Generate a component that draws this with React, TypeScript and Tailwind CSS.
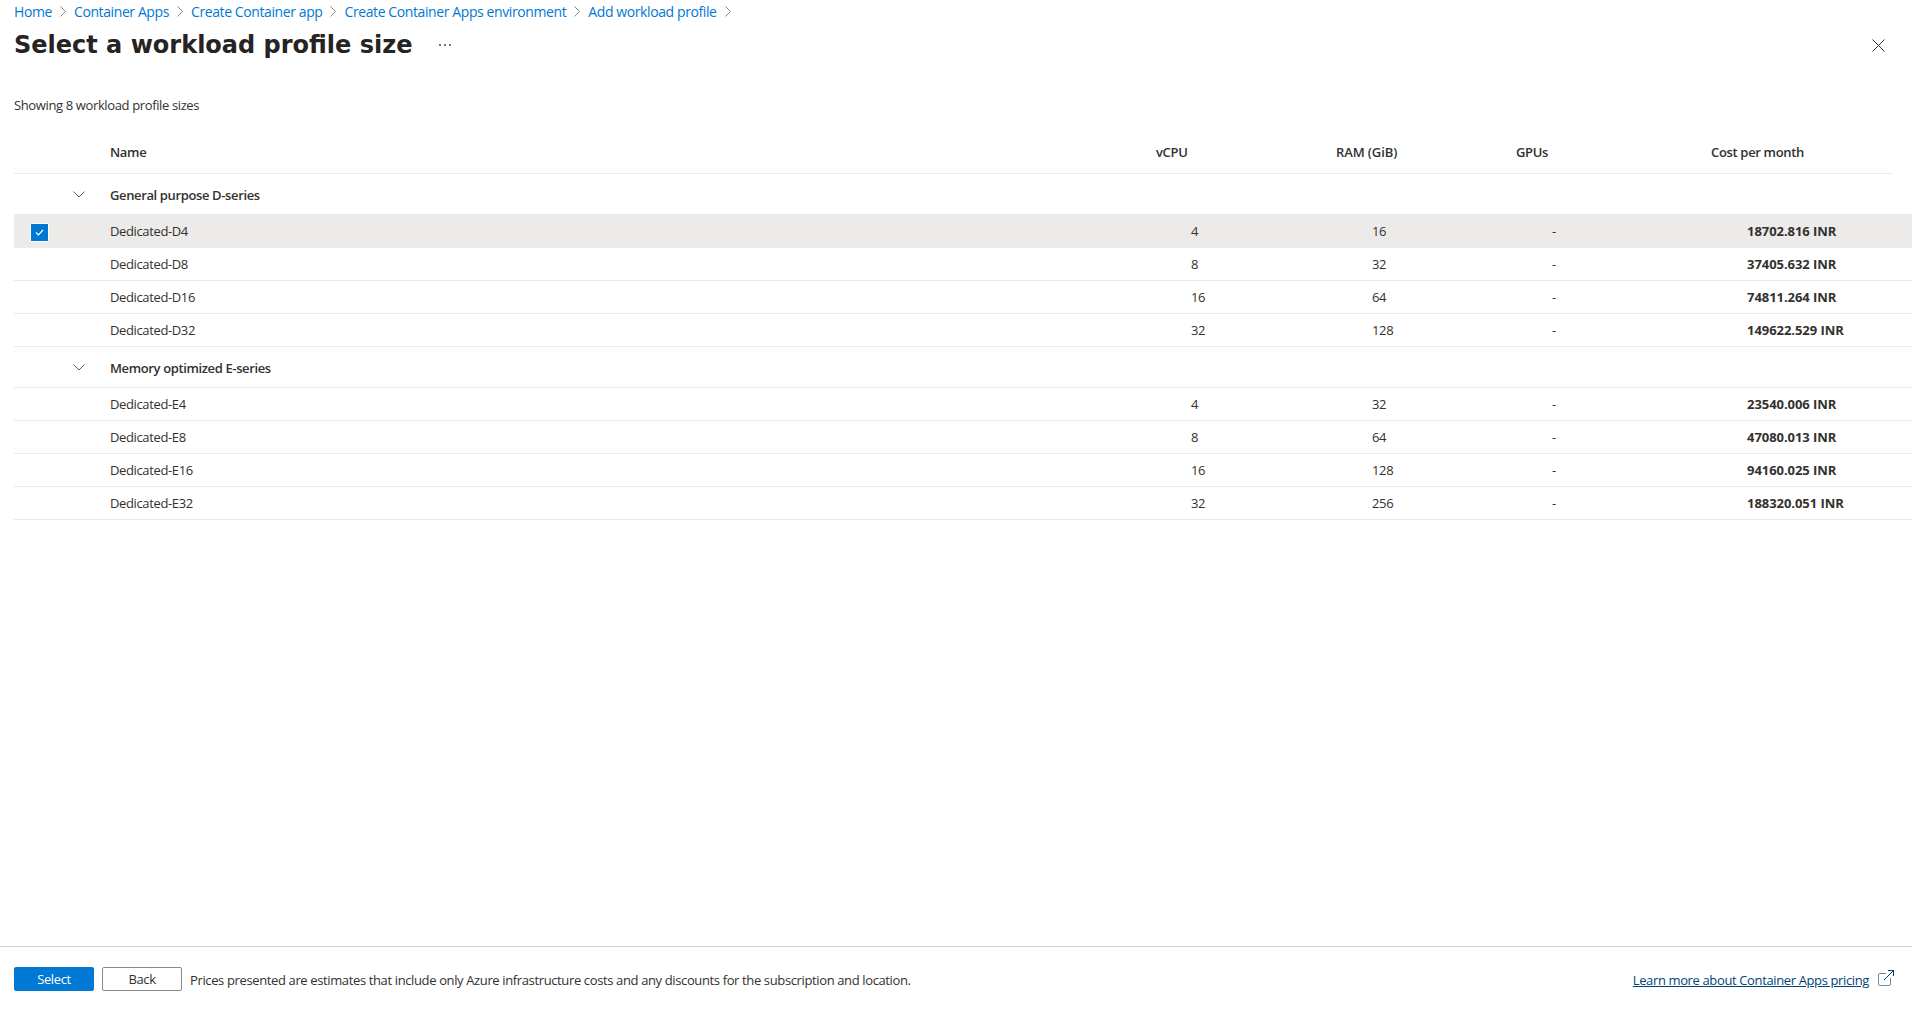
const crumbs = ["Home", "Container Apps", "Create Container app", "Create Container Apps environment", "Add workload profile"];

const groups = [
  {
    name: "General purpose D-series",
    rows: [
      { name: "Dedicated-D4", cpu: "4", ram: "16", cost: "18702.816 INR", selected: true },
      { name: "Dedicated-D8", cpu: "8", ram: "32", cost: "37405.632 INR" },
      { name: "Dedicated-D16", cpu: "16", ram: "64", cost: "74811.264 INR" },
      { name: "Dedicated-D32", cpu: "32", ram: "128", cost: "149622.529 INR" },
    ],
  },
  {
    name: "Memory optimized E-series",
    rows: [
      { name: "Dedicated-E4", cpu: "4", ram: "32", cost: "23540.006 INR" },
      { name: "Dedicated-E8", cpu: "8", ram: "64", cost: "47080.013 INR" },
      { name: "Dedicated-E16", cpu: "16", ram: "128", cost: "94160.025 INR" },
      { name: "Dedicated-E32", cpu: "32", ram: "256", cost: "188320.051 INR" },
    ],
  },
];

const rowGrid = "grid grid-cols-[96px_1045px_181px_180px_195px_1fr] items-center";

const Chevron = () => (
  <svg width="6" height="11" viewBox="0 0 6 11" fill="none" stroke="#8a8886" strokeWidth="1">
    <path d="M.5.5l5 5-5 5" />
  </svg>
);

export default function App() {
  return (
    <div className="flex h-screen flex-col overflow-hidden bg-white text-[13px] tracking-[-0.37px] text-[#323130] font-['Open_Sans','Noto_Sans',sans-serif]">
      <div className="flex h-6 items-center gap-2 pb-[1px] pl-[14px] text-[14px] tracking-[-0.4px]">
        {crumbs.map((c) => (
          <div key={c} className="flex items-center gap-2">
            <span className="text-[#0078d4]">{c}</span>
            <Chevron />
          </div>
        ))}
      </div>

      <div className="flex h-[42px] items-center pl-[14px] pr-[27px]">
        <h1 className="text-[24px] font-bold tracking-normal text-[#252423] font-['DejaVu_Sans',sans-serif]">Select a workload profile size</h1>
        <svg className="ml-[27px]" width="12" height="2" viewBox="0 0 12 2" fill="#797775">
          <rect x="0" width="2" height="2" />
          <rect x="5" width="2" height="2" />
          <rect x="10" width="2" height="2" />
        </svg>
        <svg className="ml-auto" width="13" height="13" viewBox="0 0 13 13" fill="none" stroke="#323130" strokeWidth="1">
          <path d="M.5.5l12 12M12.5.5l-12 12" />
        </svg>
      </div>

      <div className="mt-[31px] flex h-[18px] items-center pl-[14px]">Showing 8 workload profile sizes</div>

      <div className="ml-[14px] mt-[16px]">
        <div className={`${rowGrid} mr-[19px] h-[43px] border-b border-[#edebe9] pt-[1px] font-semibold tracking-[-0.33px]`}>
          <div />
          <div>Name</div>
          <div className="pl-[1px]">vCPU</div>
          <div className="tracking-[-0.1px]">RAM (GiB)</div>
          <div>GPUs</div>
          <div>Cost per month</div>
        </div>

        {groups.map((g) => (
          <div key={g.name}>
            <div className="flex h-[41px] items-center border-b border-[#edebe9] font-semibold">
              <div className="flex w-[96px] justify-end pr-[25px]">
                <svg width="12" height="7" viewBox="0 0 12 7" fill="none" stroke="#605e5c" strokeWidth="1">
                  <path d="M.5.5L6 6l5.500-5.500" />
                </svg>
              </div>
              <div className="pt-[3px]">{g.name}</div>
            </div>
            {g.rows.map((r) => (
              <div key={r.name} className={`${rowGrid} h-[33px] border-b border-[#edebe9] pt-[2px] ${r.selected ? "bg-[#edebe9]" : ""}`}>
                <div className="pl-[16px]">
                  {r.selected && (
                    <div className="flex h-[19px] w-[19px] items-center justify-center rounded-[1px] border border-white bg-[#0078d4]">
                      <svg width="9" height="7" viewBox="0 0 9 7" fill="none" stroke="#fff" strokeWidth="1.2">
                        <path d="M1 3.500L3.500 6 8 1" />
                      </svg>
                    </div>
                  )}
                </div>
                <div>{r.name}</div>
                <div className="pl-[36px]">{r.cpu}</div>
                <div className="pl-[36px]">{r.ram}</div>
                <div className="pl-[36px]">-</div>
                <div className="pl-[36px] font-bold tracking-[-0.05px]">{r.cost}</div>
              </div>
            ))}
          </div>
        ))}
      </div>

      <div className="mt-auto flex h-[63px] items-start border-t border-[#d2d0ce] pl-[14px] pr-[18px] pt-[20px]">
        <button className="h-6 w-20 rounded-[2px] bg-[#0078d4] pt-[1px] text-white">Select</button>
        <button className="ml-2 h-6 w-20 rounded-[2px] border border-[#8a8886] bg-white pt-[1px]">Back</button>
        <span className="ml-2 pt-[1px] leading-6">Prices presented are estimates that include only Azure infrastructure costs and any discounts for the subscription and location.</span>
        <a className="ml-auto pt-[1px] leading-6 text-[#004578] underline">Learn more about Container Apps pricing</a>
        <svg className="ml-[9px] mt-[3px]" width="16" height="16" viewBox="0 0 16 16" fill="none" stroke="#004578" strokeWidth="1">
          <path d="M8 3.500H2A1.500 1.500 0 0 0 .5 5v9A1.500 1.500 0 0 0 2 15.500h9a1.500 1.500 0 0 0 1.500-1.500V8" stroke="#6f8fa8" />
          <path d="M6 10L15.500.5M10 .5h5.500V6" />
        </svg>
      </div>
    </div>
  );
}
